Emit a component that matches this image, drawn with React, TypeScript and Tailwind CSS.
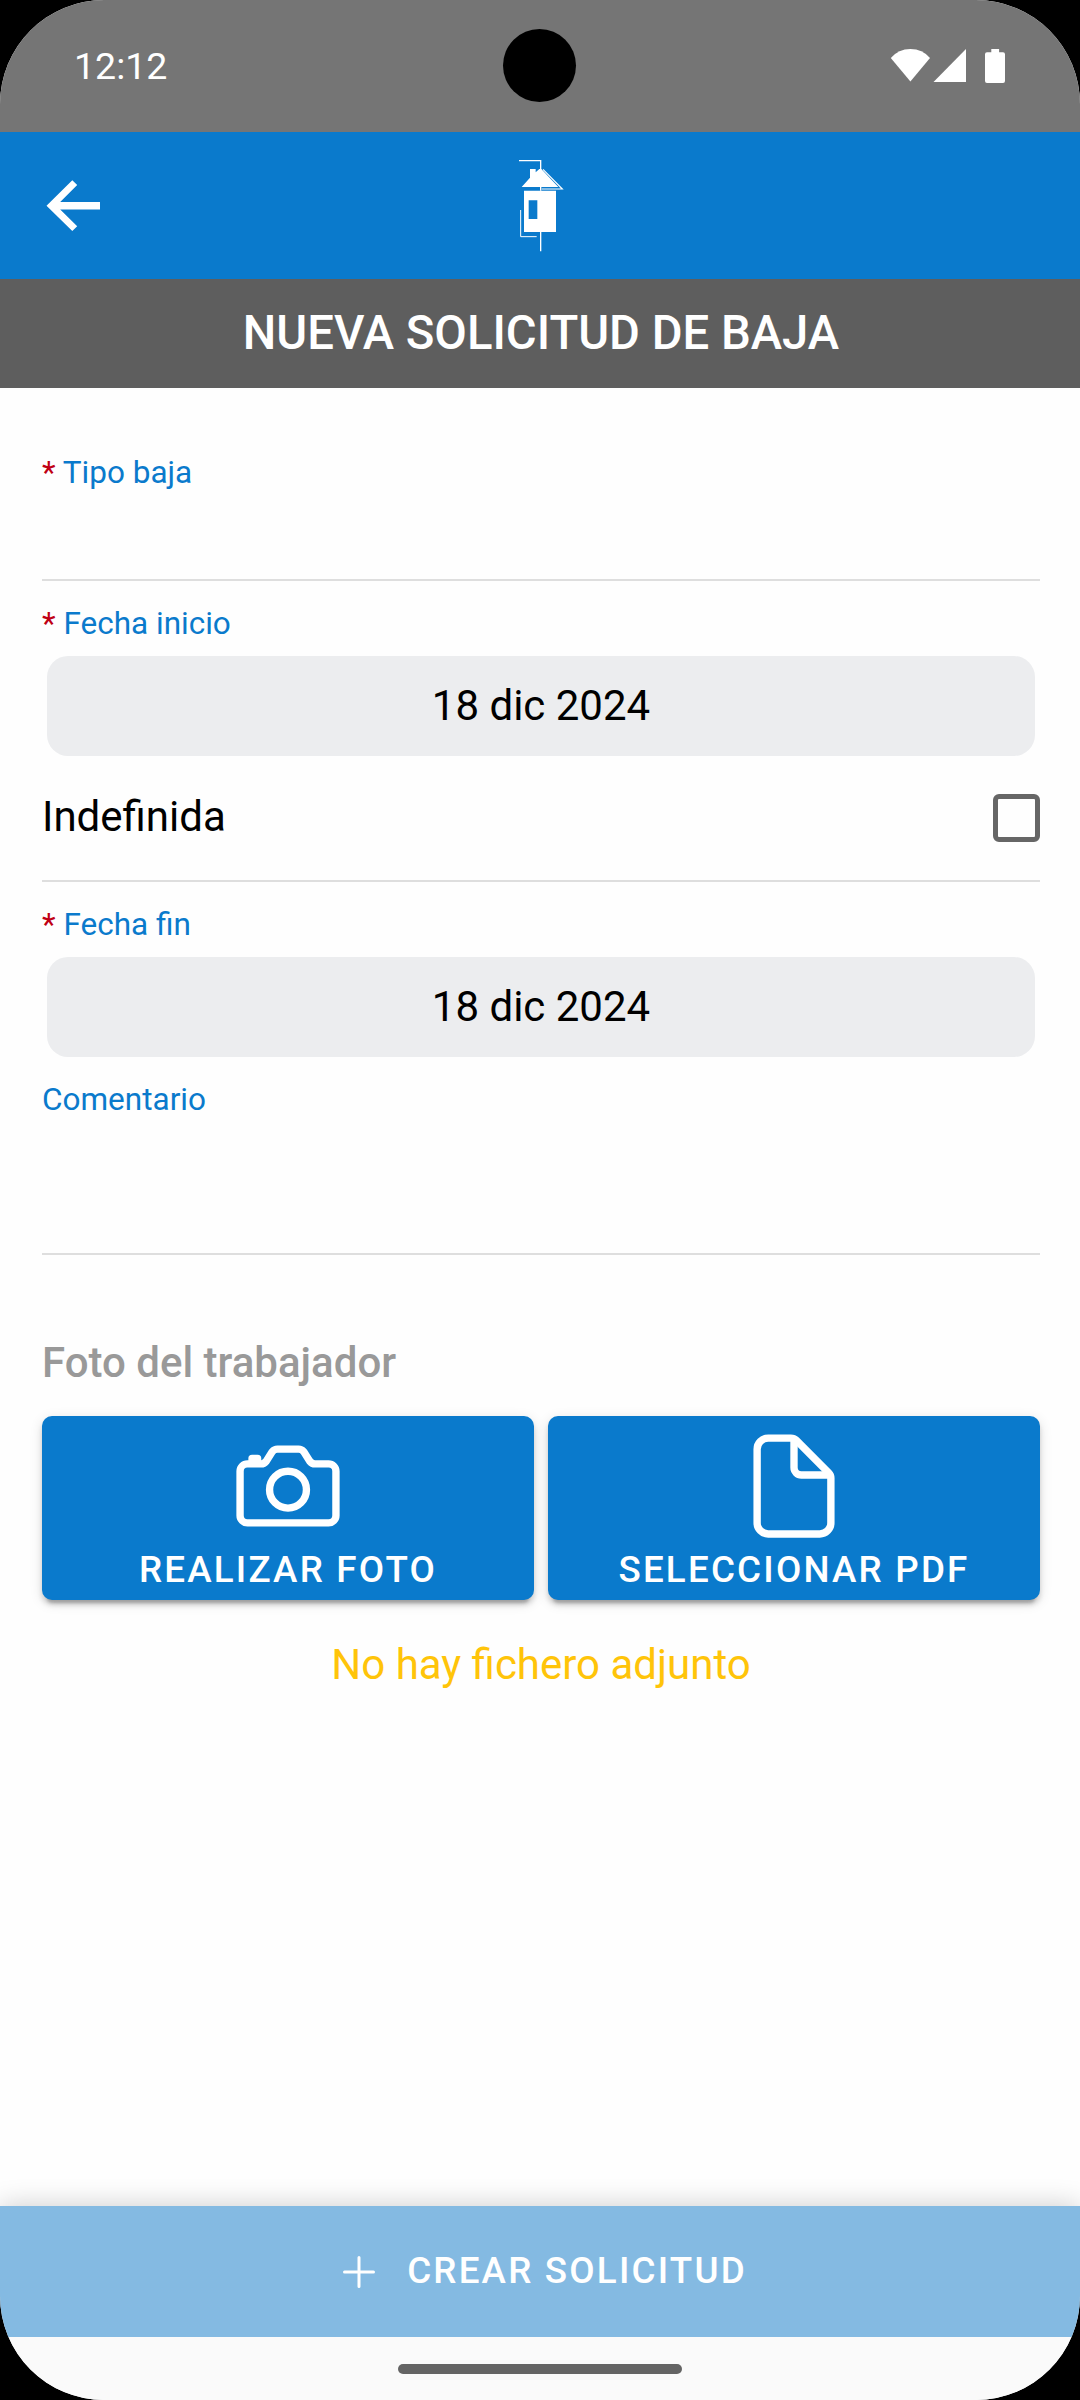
import type { ReactNode } from "react";

function StatusIcons() {
  return (
    <svg className="h-[36px] w-[116px]" viewBox="890 48 116 36" fill="#fff">
      <path d="M890.800 58 Q898.500 49 910.400 49 Q922.500 49 930 58 L910.400 81.500 Z" />
      <path d="M966 49 V82 H933.500 Z" />
      <path d="M991.300 49 h7.800 v3.200 h3.900 a2 2 0 0 1 2 2 v26.800 a2 2 0 0 1 -2 2 h-16 a2 2 0 0 1 -2 -2 v-26.800 a2 2 0 0 1 2 -2 h4.300 z" />
    </svg>
  );
}

function StatusBar() {
  return (
    <div className="relative flex h-[132px] items-center justify-between bg-[#757575] pr-[74px] pl-[74px]">
      <span className="text-[37.500px] leading-[44px] text-white">12:12</span>
      <StatusIcons />
      <div className="absolute top-[29px] left-[503px] size-[73px] rounded-full bg-black" />
    </div>
  );
}

function BackIcon() {
  return (
    <svg className="h-[52px] w-[56px]" viewBox="46 180 56 52" fill="#fff">
      <path d="M46.500 205.700 L72.300 180.300 L77.200 185.100 L60.200 201.900 H100 V209.500 H60.200 L77.200 226.300 L72.300 231.100 Z" />
    </svg>
  );
}

function HouseLogo() {
  return (
    <svg className="h-[130px] w-[100px]" viewBox="0 0 300 390" fill="#fff">
      <path d="M87 60 H154 V90 H150 V64 H87 Z" />
      <path d="M95 141 L120 113 V87 H137 V97 L148 87 H154 L205 141 Z" />
      <path d="M159 88 L217 147 H155" fill="none" stroke="#fff" strokeWidth="3.500" />
      <path d="M150 141 h4 v11 h-4 z" />
      <path d="M102 152 H198 V276 H102 Z M116 181 V237 H142 V181 Z" fillRule="evenodd" />
      <path d="M92 210 V290 H140" fill="none" stroke="#fff" strokeWidth="3" />
      <path d="M150 276 h4 v58 h-4 z" />
    </svg>
  );
}

function Header() {
  return (
    <header className="flex h-[147px] items-start justify-between bg-[#0a7acc] px-[46px]">
      <div className="w-[100px] pt-[48px]">
        <BackIcon />
      </div>
      <div className="pt-[8px]">
        <HouseLogo />
      </div>
      <div className="w-[100px]" />
    </header>
  );
}

function Label({ children, required = false }: { children: ReactNode; required?: boolean }) {
  return (
    <div className="text-[31.500px] leading-[36px] whitespace-pre text-[#0a7acc]">
      {required && <span className="text-[#c00014]">* </span>}
      {children}
    </div>
  );
}

function DateButton({ children }: { children: ReactNode }) {
  return (
    <div className="mx-[5px] flex h-[100px] items-center justify-center rounded-[21px] bg-[#ecedef] text-[42px] leading-[50px] text-black">
      {children}
    </div>
  );
}

function CameraIcon() {
  return (
    <svg className="size-[118px]" viewBox="0 0 512 512" fill="none" stroke="#fff" strokeWidth="32" strokeLinejoin="round" strokeLinecap="round">
      <path d="M350.540 148.680l-26.620-42.060C318.310 100.080 310.620 96 302 96h-92c-8.620 0-16.310 4.080-21.920 10.620l-26.620 42.060C155.850 155.230 148.620 160 140 160H80a32 32 0 0 0-32 32v192a32 32 0 0 0 32 32h352a32 32 0 0 0 32-32V192a32 32 0 0 0-32-32h-59c-8.650 0-16.850-4.770-22.460-11.320z" />
      <circle cx="256" cy="272" r="80" />
      <path d="M124 158v-22h-24v22" fill="#fff" />
    </svg>
  );
}

function DocumentIcon() {
  return (
    <svg className="size-[118px]" viewBox="0 0 512 512" fill="none" stroke="#fff" strokeWidth="32" strokeLinejoin="round" strokeLinecap="round">
      <path d="M416 221.250V416a48 48 0 0 1-48 48H144a48 48 0 0 1-48-48V96a48 48 0 0 1 48-48h98.750a32 32 0 0 1 22.620 9.370l141.260 141.260a32 32 0 0 1 9.370 22.620z" />
      <path d="M256 56v120a32 32 0 0 0 32 32h120" />
    </svg>
  );
}

function ActionButton({ icon, children }: { icon: ReactNode; children: ReactNode }) {
  return (
    <button className="flex h-[184px] flex-1 flex-col items-center rounded-[10px] bg-[#0a7acc] pt-[11px] text-[36.750px] leading-[40px] font-medium tracking-[0.06em] text-white shadow-[0_8px_3px_-5px_rgba(0,0,0,0.2),0_5px_5px_0_rgba(0,0,0,0.14),0_3px_13px_0_rgba(0,0,0,0.12)]">
      {icon}
      <span className="mt-[5px]">{children}</span>
    </button>
  );
}

function Form() {
  return (
    <main className="flex h-[1818px] flex-col bg-[#fefefe] pt-[67px] pr-[40px] pl-[42px]">
      <section className="h-[126px] border-b-2 border-[#dedede]">
        <Label required>Tipo baja</Label>
      </section>

      <section className="flex h-[301px] flex-col border-b-2 border-[#dedede] pt-[25px]">
        <Label required>Fecha inicio</Label>
        <div className="mt-[14px]">
          <DateButton>18 dic 2024</DateButton>
        </div>
        <div className="mt-[36px] flex h-[52px] items-center justify-between text-[42px] leading-[50px] text-black">
          <span className="-mt-[2px]">Indefinida</span>
          <span className="h-[48px] w-[47px] rounded-[6px] border-[5px] border-[#666]" />
        </div>
      </section>

      <section className="h-[373px] border-b-2 border-[#dedede] pt-[25px]">
        <Label required>Fecha fin</Label>
        <div className="mt-[14px]">
          <DateButton>18 dic 2024</DateButton>
        </div>
        <div className="mt-[25px]">
          <Label>Comentario</Label>
        </div>
      </section>

      <h2 className="mt-[83px] text-[42px] leading-[50px] font-medium text-[#999]">Foto del trabajador</h2>
      <div className="mt-[28px] flex gap-[14px]">
        <ActionButton icon={<CameraIcon />}>REALIZAR FOTO</ActionButton>
        <ActionButton icon={<DocumentIcon />}>SELECCIONAR PDF</ActionButton>
      </div>
      <p className="mt-[40px] text-center text-[42px] leading-[50px] text-[#ffc409]">No hay fichero adjunto</p>
    </main>
  );
}

function CreateButton() {
  return (
    <button className="relative flex h-[131px] items-center justify-center bg-[#84bae2] pl-[10px] text-[36.750px] leading-[44px] font-medium tracking-[0.06em] text-white shadow-[0_0_26px_0_rgba(0,0,0,0.2)]">
      <svg className="mr-[32px] size-[32px]" viewBox="0 0 32 32" fill="none" stroke="#fff" strokeWidth="3" strokeLinecap="round">
        <path d="M16 1.500 V30.500 M1.500 16 H30.500" />
      </svg>
      <span className="-mt-[2px]">CREAR SOLICITUD</span>
    </button>
  );
}

export default function App() {
  return (
    <div className="h-[2400px] w-[1080px] bg-black">
      <div className="flex h-[2400px] w-[1080px] flex-col overflow-hidden rounded-[104px] bg-[#fafafa] font-['Roboto',sans-serif]">
        <StatusBar />
        <Header />
        <h1 className="flex h-[109px] items-center justify-center bg-[#5e5e5e] pb-[2px] pl-[2px] text-[47.250px] leading-[56px] font-medium text-white">
          NUEVA SOLICITUD DE BAJA
        </h1>
        <Form />
        <CreateButton />
        <footer className="relative flex h-[63px] justify-center bg-[#fafafa] pt-[27px]">
          <div className="h-[10px] w-[284px] rounded-full bg-[#646464]" />
        </footer>
      </div>
    </div>
  );
}
